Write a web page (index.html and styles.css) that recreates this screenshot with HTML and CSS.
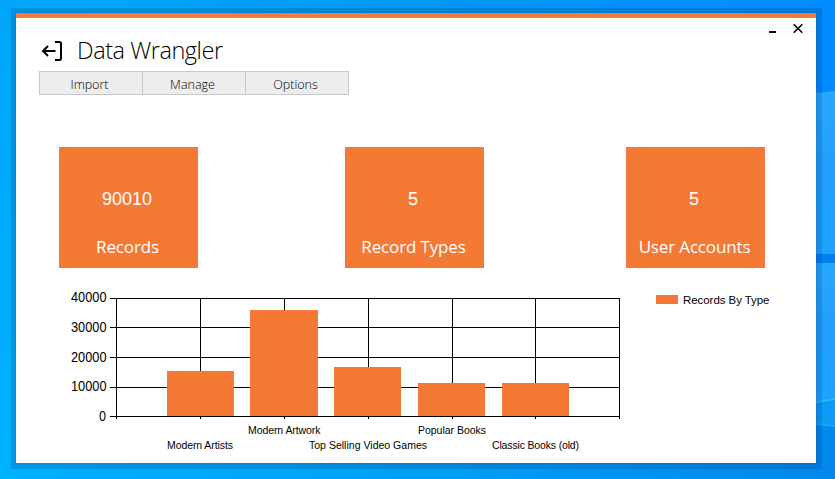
FILE: index.html
```html
<!DOCTYPE html>
<html lang="en">
<head>
<meta charset="utf-8">
<title>Data Wrangler</title>
<link rel="stylesheet" href="styles.css">
</head>
<body>
<svg class="wallpaper" width="835" height="479" aria-hidden="true">
  <defs>
    <linearGradient id="sky"><stop offset="0" stop-color="#00a8fb"/><stop offset=".5" stop-color="#0099f5"/><stop offset="1" stop-color="#008bff"/></linearGradient>
    <linearGradient id="floor"><stop offset="0" stop-color="#00b1ff"/><stop offset=".5" stop-color="#009ff7"/><stop offset="1" stop-color="#0088ee"/></linearGradient>
    <linearGradient id="pane" x1="0" y1="0" x2="0" y2="1"><stop offset="0" stop-color="#27a8ff"/><stop offset=".5" stop-color="#209fff"/><stop offset="1" stop-color="#1fa3ff"/></linearGradient>
    <linearGradient id="side" x1="0" y1="0" x2="0" y2="1"><stop offset="0" stop-color="#00a5f9"/><stop offset="1" stop-color="#00b2ff"/></linearGradient>
  </defs>
  <rect width="835" height="240" fill="url(#sky)"/>
  <rect y="240" width="835" height="239" fill="url(#floor)"/>
  <rect width="16" height="479" fill="url(#side)"/>
  <path d="M816 93L835 91V254H816Z" fill="url(#pane)"/>
  <rect x="816" y="254" width="19" height="9" fill="#0080f0"/>
  <path d="M816 263H835V399L816 402Z" fill="url(#pane)"/>
  <path d="M816 402L835 399V426L816 424Z" fill="#0c9cf8"/>
  <path d="M816 402L835 399" stroke="#20bdff" stroke-width="2"/>
  <path d="M816 424L835 426" stroke="#18a8ff" stroke-width="2"/>
</svg>
<main class="window">
  <header class="header">
    <div class="brand">
      <svg class="exit" width="22" height="22" viewBox="0 0 22 22"><path d="M14 2H18.500Q20 2 20 3.500V18.500Q20 20 18.500 20H14M14.500 11H2.500M7 6L2 11L7 16" fill="none" stroke="#000" stroke-width="2"/></svg>
      <h1>Data Wrangler</h1>
    </div>
    <div class="controls">
      <svg width="8" height="12"><path d="M0 9H7" stroke="#000" stroke-width="2"/></svg>
      <svg width="10" height="12"><path d="M.7 1.300L9.300 9.700M9.300 1.300L.7 9.700" stroke="#000" stroke-width="1.600"/></svg>
    </div>
  </header>
  <nav class="menu"><a>Import</a><a>Manage</a><a>Options</a></nav>
  <section class="cards">
    <div class="card"><strong>90010</strong><span>Records</span></div>
    <div class="card"><strong>5</strong><span>Record Types</span></div>
    <div class="card"><strong>5</strong><span>User Accounts</span></div>
  </section>
  <svg class="chart" width="730" height="170" viewBox="56 286 730 170">
    <g class="grid">
      <path d="M110 298.500H620M110 327.500H620M110 357.500H620M110 387.500H620M116.500 298V419M200.500 298V419M284.500 298V419M368.500 298V419M452.500 298V419M535.500 298V419M619.500 298V419"/>
    </g>
    <g class="bars">
      <rect x="167" y="371" width="67" height="45"/>
      <rect x="250" y="310" width="68" height="106"/>
      <rect x="334" y="367" width="67" height="49"/>
      <rect x="418" y="383" width="67" height="33"/>
      <rect x="502" y="383" width="67" height="33"/>
      <rect x="656" y="295" width="22" height="9"/>
    </g>
    <path class="grid" d="M110 416.500H620"/>
    <g class="ticks">
      <text x="71" y="302" textLength="35.500" lengthAdjust="spacingAndGlyphs">40000</text>
      <text x="71" y="332" textLength="35.500" lengthAdjust="spacingAndGlyphs">30000</text>
      <text x="71" y="362" textLength="35.500" lengthAdjust="spacingAndGlyphs">20000</text>
      <text x="71" y="391" textLength="35.500" lengthAdjust="spacingAndGlyphs">10000</text>
      <text x="99" y="421" textLength="7" lengthAdjust="spacingAndGlyphs">0</text>
    </g>
    <g class="labels">
      <text x="167" y="449" textLength="66">Modern Artists</text>
      <text x="248" y="434" textLength="72.500">Modern Artwork</text>
      <text x="309" y="449" textLength="118">Top Selling Video Games</text>
      <text x="418" y="434" textLength="68">Popular Books</text>
      <text x="492" y="449" textLength="87">Classic Books (old)</text>
    </g>
    <text class="legend" x="683" y="304" textLength="86.500">Records By Type</text>
  </svg>
</main>
</body>
</html>
```
FILE: styles.css
```css
* { box-sizing: border-box; }
body {
  margin: 0;
  width: 835px;
  height: 479px;
  padding: 13px 0 0 16px;
  overflow: hidden;
  font-family: "Open Sans", sans-serif;
  color: #000;
}
svg { display: block; }
.wallpaper { position: absolute; inset: 0; z-index: -1; }
.window {
  width: 800px;
  height: 450px;
  background: #fff;
  border-top: 5px solid #f47935;
  box-shadow: .5px .5px 0 5.500px rgba(0, 55, 105, .19), 0 0 2px rgba(0, 50, 100, .3);
}
.header {
  display: flex;
  justify-content: space-between;
  height: 53px;
  padding: 5px 13px 0 24px;
}
.brand { display: flex; align-items: flex-start; }
.exit { margin: 17px 14px 0 1px; }
h1 {
  margin: 10px 0 0;
  font-size: 23.500px;
  font-weight: 300;
  line-height: 34px;
  letter-spacing: -.45px;
  white-space: nowrap;
}
.controls { display: flex; gap: 16px; }
.menu {
  display: grid;
  grid-template-columns: 104px 103px 103px;
  grid-template-rows: 24px;
  width: 310px;
  height: 24px;
  margin-left: 23px;
}
.menu a {
  padding: 1px 3px 0 0;
  border: 1px solid #c8c8c8;
  border-left: 0;
  background: #ededed;
  font-size: 12.500px;
  font-weight: 300;
  line-height: 24px;
  height: 24px;
  text-align: center;
}
.menu a:first-child { border-left: 1px solid #c8c8c8; }
.cards {
  display: flex;
  justify-content: space-between;
  padding: 52px 51px 0 43px;
}
.card {
  display: flex;
  flex-direction: column;
  align-items: center;
  width: 139px;
  height: 121px;
  padding-top: 40px;
  background: #f47935;
  color: #fff;
}
.card:nth-child(2) { position: relative; left: 2.500px; }
.card strong {
  font: 500 18px/24px "Liberation Sans", sans-serif;
  transform: translateX(-1.500px);
}
.card span {
  margin-top: 23px;
  font-size: 17px;
  font-weight: 400;
  letter-spacing: -.15px;
  line-height: 26px;
  white-space: nowrap;
  transform: translateX(-1px);
}
.chart { margin: 18px 0 0 40px; }
.grid { fill: none; stroke: #000; shape-rendering: crispEdges; }
.bars { fill: #f47935; }
.ticks, .labels, .legend { font-family: "Liberation Sans", sans-serif; }
.ticks { font-size: 14px; }
.labels { font-size: 10.500px; }
.legend { font-size: 11.500px; }
```
